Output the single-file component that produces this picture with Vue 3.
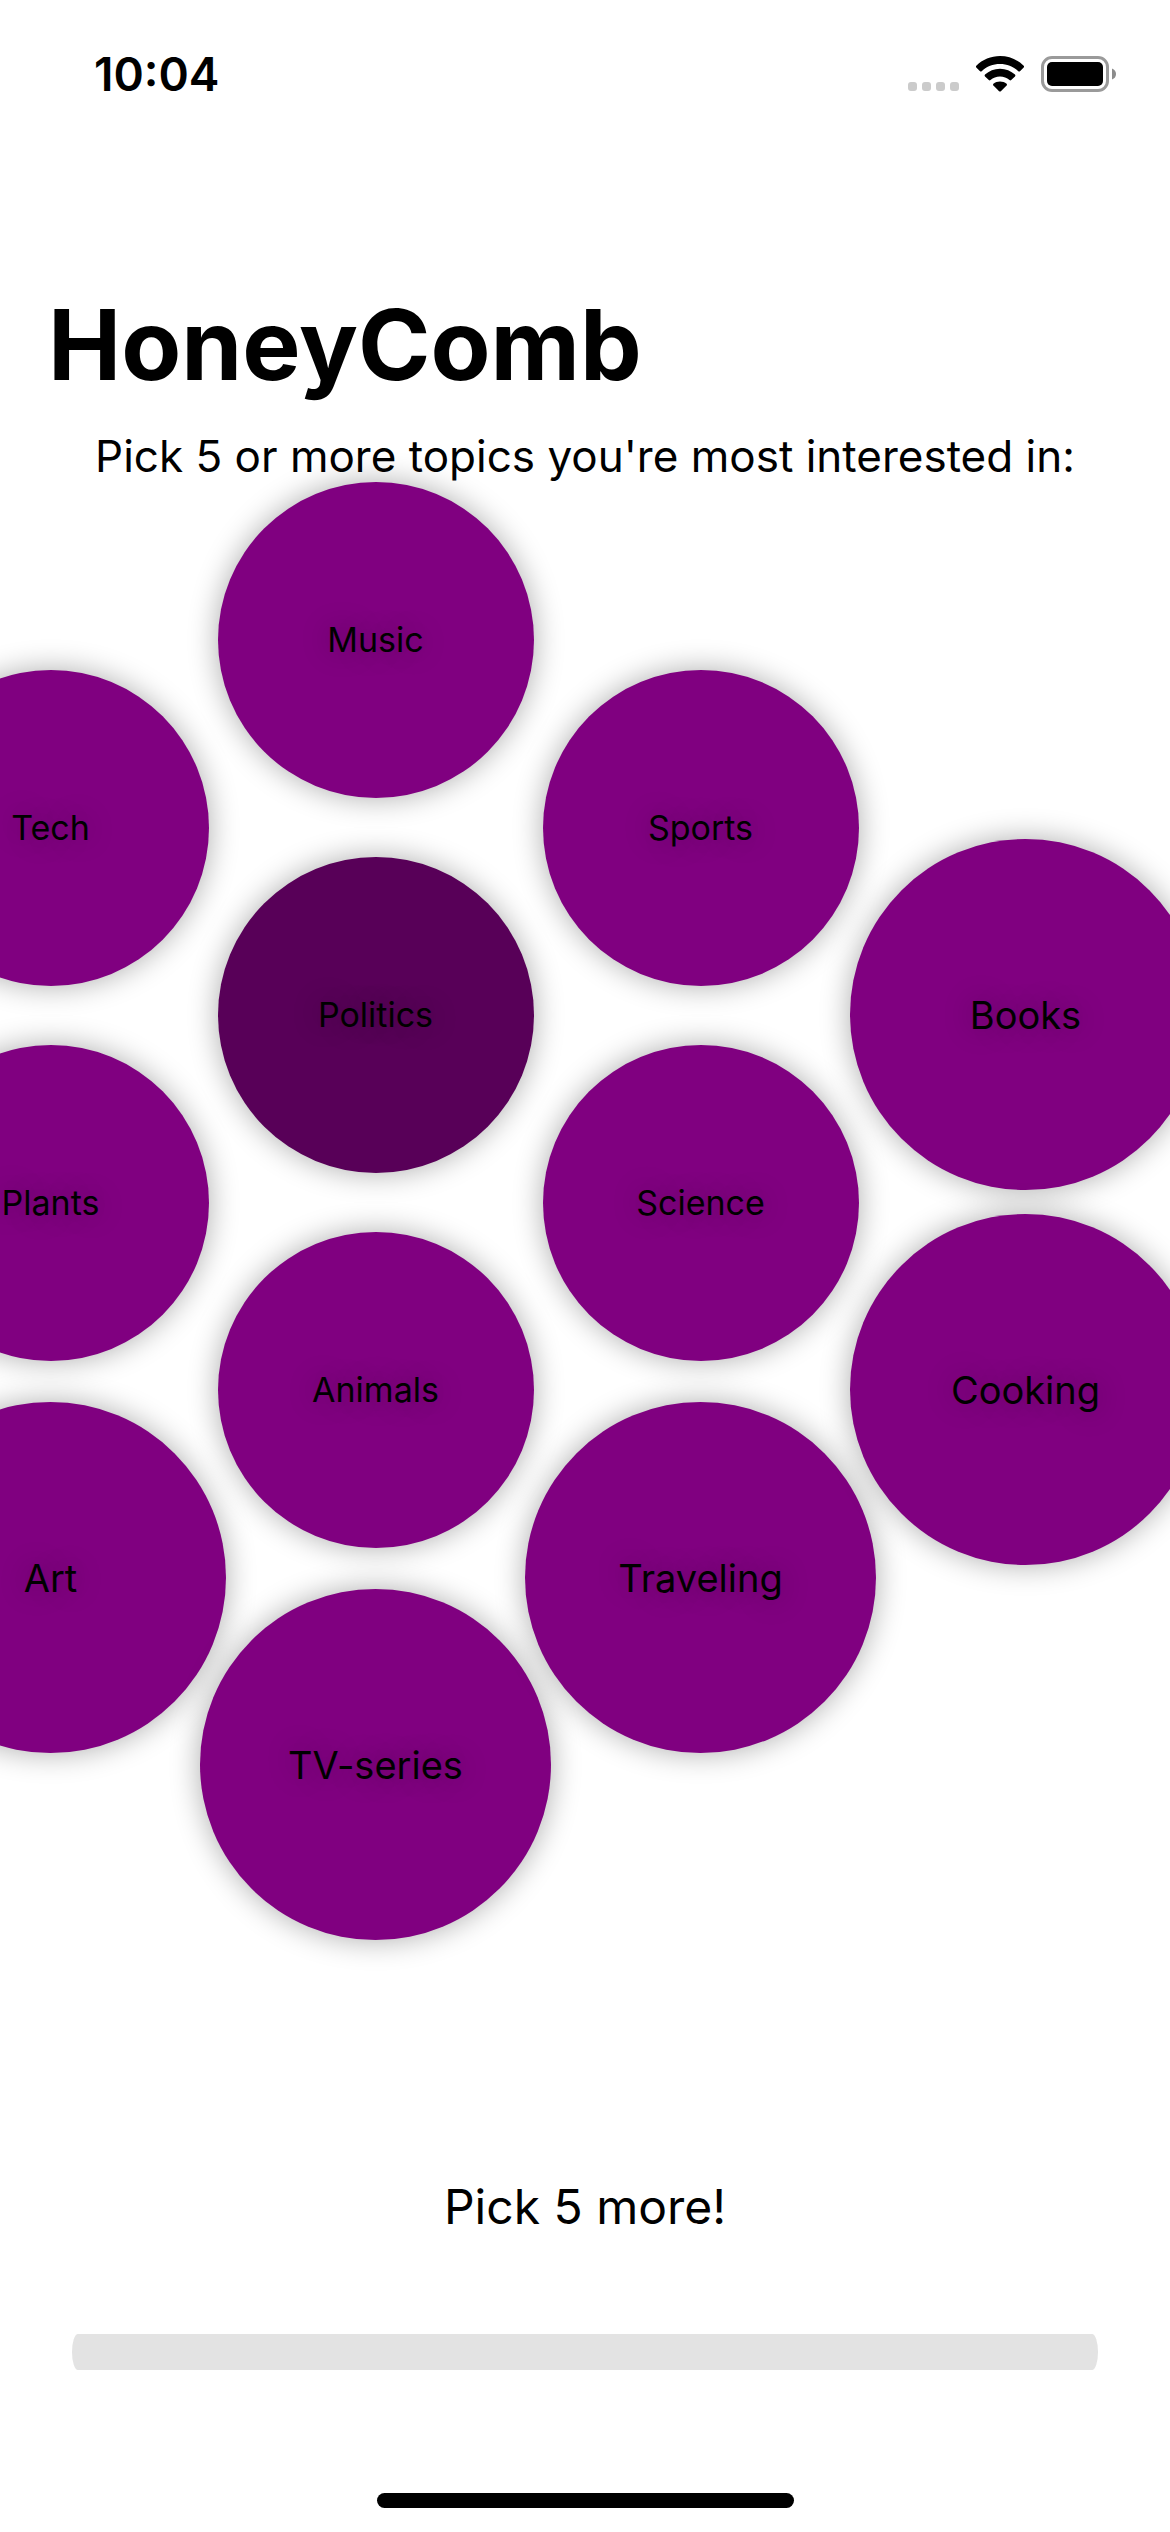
<script setup>
import { ref, computed } from 'vue'

const REQUIRED = 5

const columns = [
  { start: 'half', topics: [{ name: 'Tech' }, { name: 'Plants' }, { name: 'Art', large: true }] },
  {
    start: 'top',
    topics: [{ name: 'Music' }, { name: 'Politics', held: true }, { name: 'Animals' }, { name: 'TV-series', large: true }],
  },
  { start: 'half', topics: [{ name: 'Sports' }, { name: 'Science' }, { name: 'Traveling', large: true }] },
  { start: 'full', topics: [{ name: 'Books', large: true }, { name: 'Cooking', large: true }] },
]

const picked = ref([])
const remaining = computed(() => Math.max(0, REQUIRED - picked.value.length))

function toggle(name) {
  picked.value = picked.value.includes(name)
    ? picked.value.filter((item) => item !== name)
    : [...picked.value, name]
}
</script>

<template>
  <div class="screen">
    <header class="status">
      <time class="clock">10:04</time>
      <div class="indicators">
        <svg class="cell" width="51" height="36" viewBox="0 0 51 36" aria-hidden="true">
          <rect v-for="n in 4" :key="n" :x="(n - 1) * 14" y="26" width="9" height="9" rx="3" fill="#cbcbcb" />
        </svg>
        <svg class="wifi" width="48" height="36" viewBox="0 0 48 36" aria-hidden="true">
          <path d="M24 0C33 0 41.500 3.500 47.700 9.700Q48.500 10.600 47.700 11.500L44 15.200Q43.200 16 42.300 15.200C37.300 10.500 31 8 24 8S10.700 10.500 5.700 15.200Q4.800 16 4 15.200L.3 11.500Q-.5 10.600.3 9.700C6.500 3.500 15 0 24 0Z" />
          <path d="M24 12.700C29.800 12.700 35 14.900 39 18.600Q39.900 19.500 39 20.400L35.200 24.100Q34.400 24.900 33.500 24.100C30.900 21.900 27.600 20.600 24 20.600S17.100 21.900 14.500 24.100Q13.600 24.900 12.800 24.100L9 20.400Q8.100 19.500 9 18.600C13 14.900 18.200 12.700 24 12.700Z" />
          <path d="M24 25.400C26.500 25.400 28.800 26.200 30.600 27.700Q31.400 28.500 30.600 29.400L24.900 35.200Q24 36 23.100 35.200L17.400 29.400Q16.600 28.500 17.400 27.700C19.200 26.200 21.500 25.400 24 25.400Z" />
        </svg>
        <svg class="battery" width="75" height="36" viewBox="0 0 75 36" aria-hidden="true">
          <rect x="1.500" y="1.500" width="65" height="33" rx="9.500" fill="none" stroke="#9a9a9a" stroke-width="3" />
          <rect x="6" y="6" width="56" height="24" rx="5" />
          <path d="M71 12.500Q75 14 75 18T71 23.500Z" fill="#8c8c8c" />
        </svg>
      </div>
    </header>

    <main class="content">
      <h1 class="title">HoneyComb</h1>
      <p class="subtitle">Pick 5 or more topics you're most interested in:</p>

      <div class="comb" role="group" aria-label="Topics">
        <div v-for="(column, index) in columns" :key="index" class="column" :class="column.start">
          <div v-for="topic in column.topics" :key="topic.name" class="slot">
            <button
              type="button"
              class="topic"
              :class="{ large: topic.large, held: topic.held || picked.includes(topic.name) }"
              :aria-pressed="picked.includes(topic.name)"
              @click="toggle(topic.name)"
            >
              {{ topic.name }}
            </button>
          </div>
        </div>
      </div>
    </main>

    <footer class="footer">
      <label class="more" for="pick-progress">Pick {{ remaining }} more!</label>
      <progress id="pick-progress" class="progress" :value="picked.length" :max="REQUIRED"></progress>
      <div class="home"></div>
    </footer>
  </div>
</template>

<style>
body {
  margin: 0;
  background: #fff;
}
</style>

<style scoped>
.screen {
  display: flex;
  flex-direction: column;
  min-height: 100vh;
  overflow: hidden;
  color: #000;
  font-family: Inter, "Liberation Sans", sans-serif;
}

.status {
  display: flex;
  align-items: center;
  justify-content: space-between;
  height: 148px;
  padding: 0 54px 0 94px;
}

.clock {
  font-size: 46px;
  font-weight: 600;
}

.indicators {
  display: flex;
}

.wifi {
  margin-left: 17px;
}

.battery {
  margin-left: 17px;
}

.title {
  margin: 136px 48px 20px;
  font-size: 98px;
  font-weight: 700;
  line-height: 122px;
}

.subtitle {
  margin: 0;
  font-size: 44px;
  line-height: 60px;
  text-align: center;
}

.comb {
  display: flex;
  margin: -34px 0 0 -112px;
}

.column {
  flex: none;
  width: 325px;
}

.half {
  padding-top: 188px;
}

.full {
  padding-top: 375px;
}

.slot {
  display: flex;
  align-items: center;
  justify-content: center;
  height: 375px;
}

.topic {
  flex: none;
  width: 316px;
  height: 316px;
  padding: 0;
  border: 0;
  border-radius: 50%;
  background: #800080;
  box-shadow: 0 0 30px rgba(0, 0, 0, 0.33);
  color: #000;
  font-family: inherit;
  font-size: 34px;
  text-shadow: 0 0 30px rgba(0, 0, 0, 0.33);
}

.large {
  width: 351px;
  height: 351px;
  font-size: 38px;
}

.held {
  background: #580058;
}

.footer {
  display: flex;
  flex-direction: column;
  align-items: center;
  margin-top: auto;
  padding: 0 72px 24px;
}

.more {
  font-size: 48px;
  line-height: 60px;
}

.progress {
  appearance: none;
  width: 100%;
  height: 36px;
  margin: 97px 0 123px;
  border: 0;
  border-radius: 6px / 18px;
  background: #e3e3e3;
  overflow: hidden;
}

.progress::-webkit-progress-bar {
  background: #e3e3e3;
}

.progress::-webkit-progress-value {
  background: #800080;
}

.home {
  width: 417px;
  height: 15px;
  border-radius: 8px;
  background: #000;
}
</style>
